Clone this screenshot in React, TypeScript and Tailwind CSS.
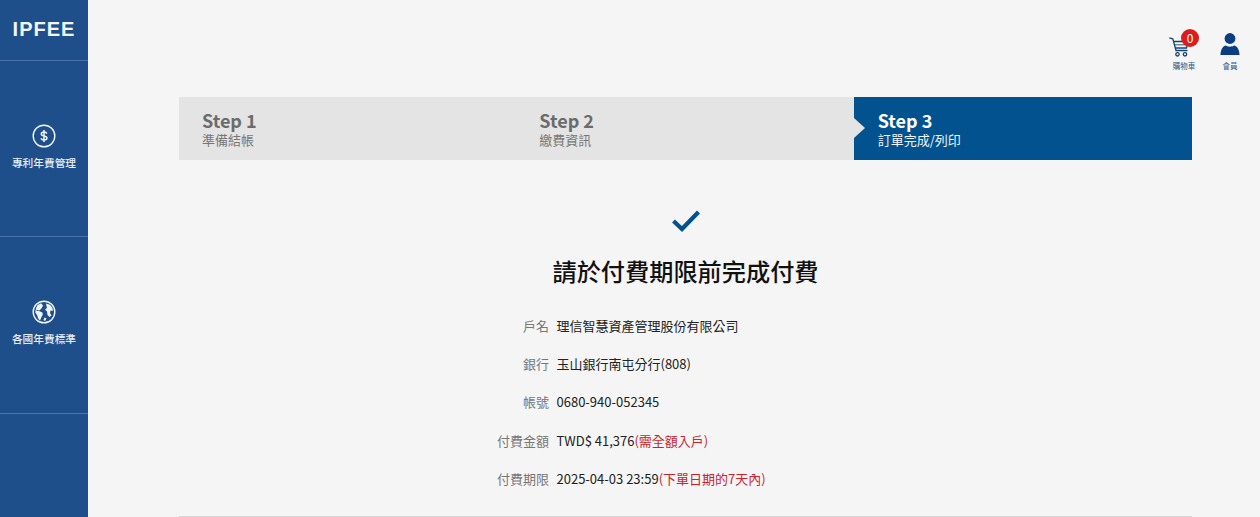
import React from "react";

const cjk = { fontFamily: '"Noto Sans CJK TC", "Noto Sans CJK SC", sans-serif' };

function DollarIcon() {
  return (
    <svg width="24" height="24" viewBox="0 0 24 24" fill="none" stroke="#f1f5fa">
      <circle cx="12" cy="12" r="10.800" strokeWidth="1.400" />
      <path d="M14.800 9.600c-.4-1-1.400-1.600-2.800-1.600-1.600 0-2.700.8-2.700 2 0 2.700 5.600 1.300 5.600 4 0 1.200-1.200 2-2.900 2-1.500 0-2.600-.7-3-1.800M12 6v12" strokeWidth="1.500" />
    </svg>
  );
}

function GlobeIcon() {
  return (
    <svg width="24" height="24" viewBox="0 0 24 24">
      <circle cx="12" cy="12" r="10.800" fill="none" stroke="#f1f5fa" strokeWidth="1.400" />
      <path fill="#f1f5fa" d="M9 3.200 5.600 5 3.800 8.600 4.600 10.800 7 11 10.400 12.600 10.800 14.600 9.400 17.200 8 20.600 6.500 19 5 15 3.300 12.500 3.600 9.500 7.500 10.500 9.800 8 11 5.500 Z" />
      <path fill="#f1f5fa" d="M14 3.500 18 4.800 20.500 8 20.800 11 18.500 10.500 18 13 19.500 15.500 17.500 17 15.500 15 15 11.500 13 9.500 15 8 14.500 6 Z" />
      <path fill="#f1f5fa" d="M12.500 17.500 14.500 18.500 13 21 11.500 20 Z" />
    </svg>
  );
}

function CartIcon() {
  return (
    <svg width="20" height="20" viewBox="0 0 20 20" fill="none" stroke="#17456f" strokeWidth="1.300" className="-ml-[3px] mt-[8px] self-start">
      <path d="M0.300 0.800 3.800 1.800 7 13.500H18.500" />
      <path d="M4.500 4.500H19L17.500 11H6.200" />
      <path d="M5.500 7.800H18.500" strokeWidth="0.900" />
      <circle cx="8.500" cy="17.300" r="1.700" />
      <circle cx="16" cy="17.300" r="1.700" />
    </svg>
  );
}

function UserIcon() {
  return (
    <svg width="20" height="22" viewBox="0 0 20 22" fill="#0b3d83" className="mt-[4px]">
      <circle cx="10" cy="5.500" r="5.400" />
      <path d="M0.500 22c0-5.500 2.800-9.500 5.500-9.500 1 .8 2.400 1.200 4 1.200s3-.4 4-1.200c2.700 0 5.500 4 5.500 9.500Z" />
    </svg>
  );
}

function Step({ title, sub, active }: { title: string; sub: string; active?: boolean }) {
  return (
    <div className={active ? "relative flex-1 pl-[24px] pt-[13px] bg-[#02528f] text-white" : "flex-1 pl-[23px] pt-[13px] text-[#6b6b6b]"}>
      {active && (
        <div className="absolute left-0 top-[21px] w-0 h-0 border-y-[10.500px] border-y-transparent border-l-[11px] border-l-[#e4e4e4]" />
      )}
      <div className="text-[18px] font-semibold leading-[20px]">{title}</div>
      <div className={active ? "text-[13px] leading-[20px] text-[#f0f4f8]" : "text-[13px] leading-[20px] text-[#777777]"}>{sub}</div>
    </div>
  );
}

function Row({ label, value, note }: { label: string; value: string; note?: string }) {
  return (
    <div className="flex h-[38.250px] items-center text-[13px]">
      <div className="w-[70px] text-right text-[#777777]">{label}</div>
      <div className="ml-[7.500px] text-[#222222] whitespace-nowrap">
        {value}
        {note && <span className="text-[#c9242b]">{note}</span>}
      </div>
    </div>
  );
}

export default function App() {
  return (
    <div className="flex h-[517px] w-[1260px] overflow-hidden bg-[#f5f5f5]" style={cjk}>
      <aside className="w-[88px] shrink-0 bg-[#1f4f8b] flex flex-col text-[#e6edf5]">
        <div className="h-[61px] border-b border-[#4a74a8] flex items-start justify-center pt-[15px]">
          <span className="text-[20px] leading-[28px] font-bold tracking-[1px] text-[#f2f6fb]" style={{ fontFamily: '"Liberation Sans", sans-serif' }}>IPFEE</span>
        </div>
        <div className="h-[176px] border-b border-[#4a74a8] flex flex-col items-center pt-[63px]">
          <DollarIcon />
          <div className="mt-[7px] text-[10.700px] leading-[16px] font-medium whitespace-nowrap">專利年費管理</div>
        </div>
        <div className="h-[177px] border-b border-[#4a74a8] flex flex-col items-center pt-[63px]">
          <GlobeIcon />
          <div className="mt-[7px] text-[10.700px] leading-[16px] font-medium whitespace-nowrap">各國年費標準</div>
        </div>
      </aside>
      <main className="flex-1 min-w-0 relative">
        <div className="h-[97px] flex justify-end items-start pt-[29px] pr-[19px] gap-[23px]">
          <div className="relative flex flex-col items-center w-[24px]">
            <CartIcon />
            <span className="absolute left-[9px] top-0 w-[18px] h-[18px] rounded-full bg-[#dd1c1c] text-white text-[12px] leading-[17px] text-center">0</span>
            <span className="mt-[3px] text-[7.500px] leading-[12px] text-[#2c5a86] whitespace-nowrap">購物車</span>
          </div>
          <div className="flex flex-col items-center w-[22px]">
            <UserIcon />
            <span className="mt-[5px] text-[7.500px] leading-[12px] text-[#2c5a86] whitespace-nowrap">會員</span>
          </div>
        </div>
        <div className="ml-[91px] w-[1013px] h-[63px] flex bg-[#e4e4e4]">
          <Step title="Step 1" sub="準備結帳" />
          <Step title="Step 2" sub="繳費資訊" />
          <Step title="Step 3" sub="訂單完成/列印" active />
        </div>
        <div className="ml-[91px] w-[1013px] flex flex-col items-center pt-[50px]">
          <svg width="28" height="22" viewBox="0 0 28 22" fill="none" stroke="#02528f" strokeWidth="4.200">
            <path d="M1.500 11 10 19 26.500 2" />
          </svg>
          <h1 className="mt-[21px] text-[24.200px] leading-[36px] font-medium text-[#111111]">請於付費期限前完成付費</h1>
        </div>
        <div className="ml-[391px] w-[500px] mt-[17.500px]">
          <Row label="戶名" value="理信智慧資產管理股份有限公司" />
          <Row label="銀行" value="玉山銀行南屯分行(808)" />
          <Row label="帳號" value="0680-940-052345" />
          <Row label="付費金額" value="TWD$ 41,376" note="(需全額入戶)" />
          <Row label="付費期限" value="2025-04-03 23:59" note="(下單日期的7天內)" />
        </div>
        <div className="absolute left-[91px] top-[516px] w-[1013px] h-px bg-[#d8d8d8]" />
      </main>
    </div>
  );
}
